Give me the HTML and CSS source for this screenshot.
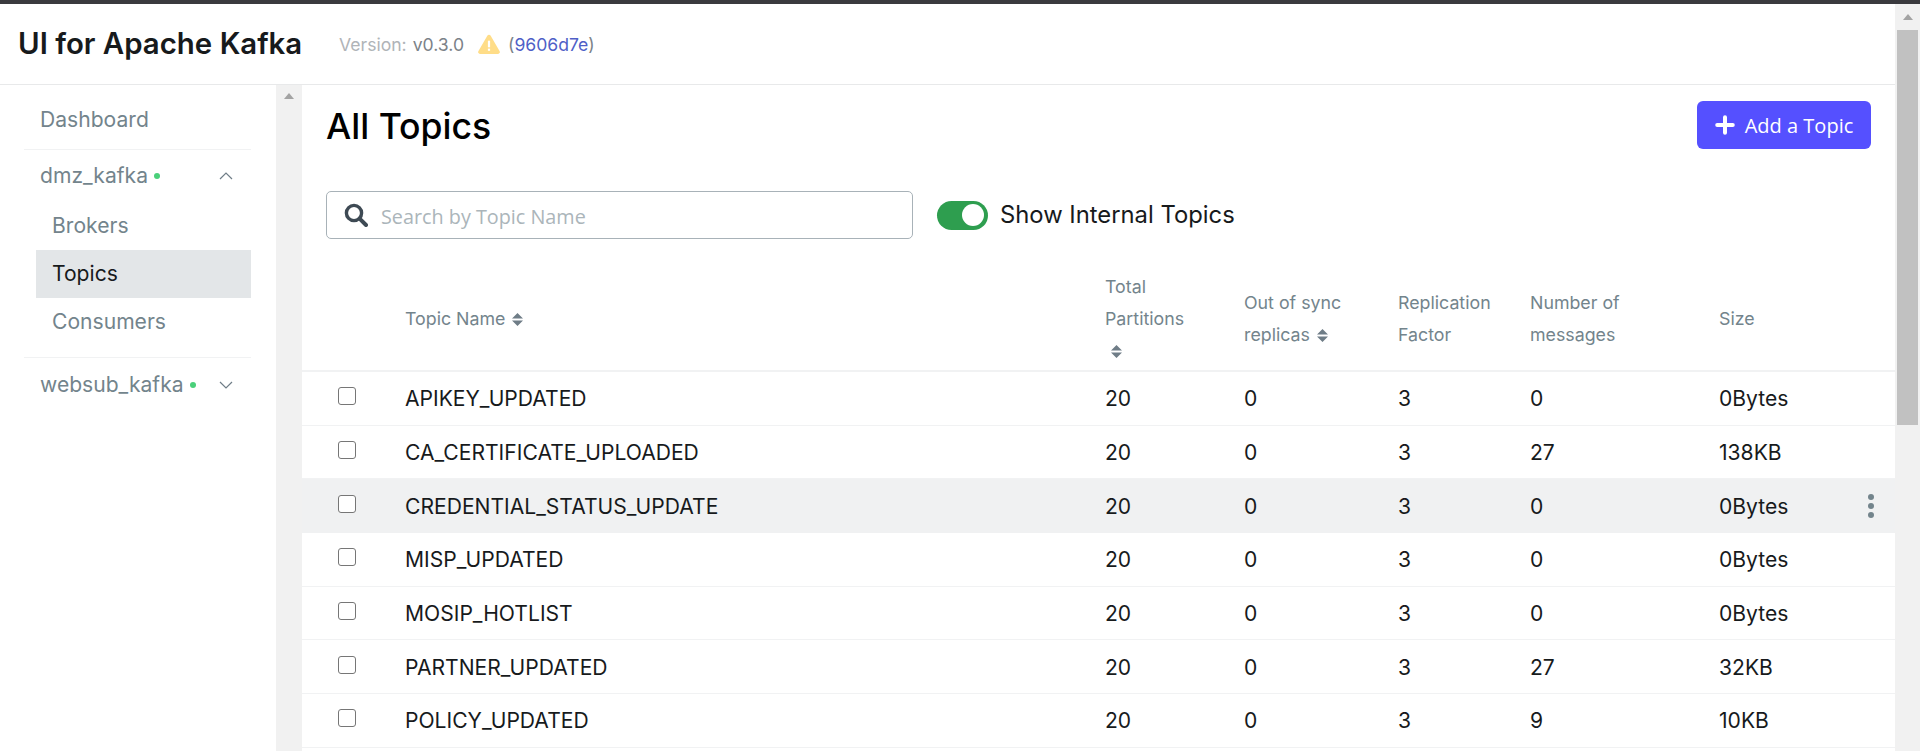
FILE: index.html
```html
<!DOCTYPE html>
<html lang="en">
<head>
<meta charset="utf-8">
<title>UI for Apache Kafka</title>
<link rel="stylesheet" href="styles.css">
</head>
<body>
<div class="window">
  <div class="page">
    <header class="navbar">
      <span class="brand">UI for Apache Kafka</span>
      <span class="version">
        <span class="version-label">Version:</span>
        <span class="version-num">v0.3.0</span>
        <svg class="warn" viewBox="0 0 20 18"><path d="M10 0.5a1.6 1.6 0 0 1 1.4.8l8.3 14.4a1.6 1.6 0 0 1-1.4 2.3H1.7a1.6 1.6 0 0 1-1.4-2.3L8.6 1.3A1.6 1.6 0 0 1 10 .5z" fill="#ffdd88"/><rect x="9" y="6" width="2" height="6" fill="#fff"/><rect x="9" y="13.2" width="2" height="2" fill="#fff"/></svg>
        <span class="paren">(<span class="hash">9606d7e</span>)</span>
      </span>
    </header>
    <div class="body">
      <nav class="sidebar">
        <a class="nav-top">Dashboard</a>
        <hr class="nav-rule">
        <div class="cluster">
          <span class="cluster-name">dmz_kafka</span><i class="dot"></i>
          <svg class="chev" viewBox="0 0 14 8"><path d="M1 7l6-6 6 6" fill="none" stroke="#6f7d87" stroke-width="1.2"/></svg>
        </div>
        <a class="nav-sub">Brokers</a>
        <a class="nav-sub active">Topics</a>
        <a class="nav-sub">Consumers</a>
        <hr class="nav-rule second">
        <div class="cluster">
          <span class="cluster-name">websub_kafka</span><i class="dot"></i>
          <svg class="chev" viewBox="0 0 14 8"><path d="M1 1l6 6 6-6" fill="none" stroke="#6f7d87" stroke-width="1.2"/></svg>
        </div>
      </nav>
      <div class="side-track"><i class="arrow-up"></i></div>
      <main class="main">
        <div class="title-row">
          <h1 class="title">All Topics</h1>
          <button class="add-btn"><svg class="plus" viewBox="0 0 18 18"><path d="M9 2v14M2 9h14" stroke="#fff" stroke-width="3.6" stroke-linecap="round"/></svg>Add a Topic</button>
        </div>
        <div class="filter-row">
          <label class="search">
            <svg class="search-icon" viewBox="0 0 24 24"><circle cx="10" cy="10" r="7.6" fill="none" stroke="#3e4a54" stroke-width="3.4"/><path d="M15.6 15.6l6.4 6.4" stroke="#3e4a54" stroke-width="4" stroke-linecap="round"/></svg>
            <input class="search-input" placeholder="Search by Topic Name">
          </label>
          <span class="toggle"><i class="knob"></i></span>
          <span class="toggle-label">Show Internal Topics</span>
        </div>
        <table class="topics">
          <colgroup>
            <col class="c-check"><col class="c-name"><col class="c-part"><col class="c-sync"><col class="c-repl"><col class="c-msgs"><col class="c-size"><col class="c-act">
          </colgroup>
          <thead>
            <tr>
              <th></th>
              <th>Topic Name <svg class="sort" viewBox="0 0 11 13"><path d="M5.5 0L11 5.5H0zM0 7.5h11L5.5 13z" fill="#6f7d87"/></svg></th>
              <th>Total<br>Partitions<br><svg class="sort wide" viewBox="0 0 11 13"><path d="M5.5 0L11 5.5H0zM0 7.5h11L5.5 13z" fill="#6f7d87"/></svg></th>
              <th>Out of sync<br>replicas <svg class="sort" viewBox="0 0 11 13"><path d="M5.5 0L11 5.5H0zM0 7.5h11L5.5 13z" fill="#6f7d87"/></svg></th>
              <th>Replication<br>Factor</th>
              <th>Number of<br>messages</th>
              <th>Size</th>
              <th></th>
            </tr>
          </thead>
          <tbody>
            <tr><td><i class="check"></i></td><td>APIKEY_UPDATED</td><td>20</td><td>0</td><td>3</td><td>0</td><td>0Bytes</td><td></td></tr>
            <tr><td><i class="check"></i></td><td>CA_CERTIFICATE_UPLOADED</td><td>20</td><td>0</td><td>3</td><td>27</td><td>138KB</td><td></td></tr>
            <tr class="hover"><td><i class="check"></i></td><td>CREDENTIAL_STATUS_UPDATE</td><td>20</td><td>0</td><td>3</td><td>0</td><td>0Bytes</td><td><span class="dots"><i></i><i></i><i></i></span></td></tr>
            <tr><td><i class="check"></i></td><td>MISP_UPDATED</td><td>20</td><td>0</td><td>3</td><td>0</td><td>0Bytes</td><td></td></tr>
            <tr><td><i class="check"></i></td><td>MOSIP_HOTLIST</td><td>20</td><td>0</td><td>3</td><td>0</td><td>0Bytes</td><td></td></tr>
            <tr><td><i class="check"></i></td><td>PARTNER_UPDATED</td><td>20</td><td>0</td><td>3</td><td>27</td><td>32KB</td><td></td></tr>
            <tr><td><i class="check"></i></td><td>POLICY_UPDATED</td><td>20</td><td>0</td><td>3</td><td>9</td><td>10KB</td><td></td></tr>
          </tbody>
        </table>
      </main>
    </div>
  </div>
  <div class="page-scroll"><i class="arrow-up"></i><div class="thumb"></div></div>
</div>
</body>
</html>
```

FILE: styles.css
```css
* { box-sizing: border-box; }
html, body { margin: 0; height: 100%; overflow: hidden; }
body {
  font-family: Inter, "Liberation Sans", sans-serif;
  font-size: 21.1px;
  color: #171a1c;
  background: #fff;
  border-top: 4px solid #3a3a3e;
}
.window { display: flex; height: 747px; overflow: hidden; }
.page { flex: 1; min-width: 0; display: flex; flex-direction: column; }

.navbar {
  height: 81px;
  flex: none;
  display: flex;
  align-items: center;
  padding: 0 0 0 18px;
  border-bottom: 1px solid #e8e9ea;
}
.brand { font-size: 29.4px; font-weight: 600; color: #171a1c; width: 321px; line-height: 1; }
.version { display: flex; align-items: center; font-size: 17.6px; }
.version-label { color: #b0b4b8; margin-right: 6px; }
.version-num { color: #7b8288; }
.warn { width: 22px; height: 20px; margin: 0 8px 0 14px; }
.paren { color: #7b8288; }
.hash { color: #4f5fc7; }

.body { flex: 1; display: flex; min-height: 0; }
.sidebar { width: 276px; flex: none; padding: 11px 25px 0 24px; }
.nav-top {
  display: block;
  height: 48px;
  line-height: 48px;
  padding-left: 16px;
  color: #73848c;
}
.nav-rule { border: 0; height: 1px; margin: 5px 0 0; background: #f1f2f3; }
.nav-rule.second { margin-top: 11px; }
.cluster {
  display: flex;
  align-items: center;
  height: 52px;
  padding-left: 16px;
  color: #73848c;
}
.cluster-name { line-height: 1; }
.nav-rule.second + .cluster { height: 54px; }
.dot { width: 6px; height: 6px; border-radius: 50%; background: #4ad07a; margin-left: 6px; }
.chev { width: 14px; height: 8px; margin-left: auto; margin-right: 18px; }
.nav-sub {
  display: block;
  height: 48px;
  line-height: 48px;
  margin-left: 12px;
  padding-left: 16px;
  color: #73848c;
}
.nav-sub.active { background: #e3e6e8; color: #171a1c; }

.side-track {
  width: 26px;
  flex: none;
  background: #f1f1f1;
  display: flex;
  justify-content: center;
  padding-top: 8px;
}
.arrow-up {
  display: block;
  width: 0;
  height: 0;
  border-left: 5.5px solid transparent;
  border-right: 5.5px solid transparent;
  border-bottom: 6px solid #a3a3a3;
}

.main { flex: 1; min-width: 0; }
.title-row {
  display: flex;
  justify-content: space-between;
  height: 48px;
  margin-top: 16px;
  padding: 0 24px;
}
.title { margin: 2px 0 0; font-size: 35.6px; font-weight: 500; color: #000; line-height: 48px; }
.add-btn {
  width: 174px;
  height: 48px;
  display: flex;
  align-items: center;
  justify-content: center;
  gap: 10px;
  border: 0;
  border-radius: 6px;
  background: #5550ff;
  color: #fff;
  font-family: "Open Sans", sans-serif;
  font-size: 20px;
}
.plus { width: 20px; height: 20px; }
.filter-row {
  display: flex;
  align-items: center;
  margin-top: 42px;
  padding-left: 24px;
}
.search {
  width: 587px;
  height: 48px;
  display: flex;
  align-items: center;
  padding-left: 17px;
  border: 1px solid #a8b2b8;
  border-radius: 5px;
}
.search-icon { width: 24px; height: 24px; flex: none; }
.search-input {
  flex: 1;
  min-width: 0;
  height: 30px;
  margin: 2px 0 0 13px;
  border: 0;
  outline: 0;
  padding: 0;
  background: none;
  font-family: "Open Sans", sans-serif;
  font-size: 19.8px;
}
.search-input::placeholder { color: #abb5ba; opacity: 1; }
.toggle {
  width: 51px;
  height: 29px;
  margin-left: 24px;
  border-radius: 15px;
  background: #2e9e4f;
  display: flex;
  justify-content: flex-end;
  align-items: center;
  padding-right: 4px;
}
.knob { width: 22px; height: 22px; border-radius: 50%; background: #fff; }
.toggle-label {
  margin: -1px 0 0 12px;
  font-size: 23.8px;
  color: #171a1c;
}

.topics {
  width: 1593px;
  margin-top: 27px;
  table-layout: fixed;
  border-collapse: separate;
  border-spacing: 0;
}
.c-check { width: 103px; }
.c-name { width: 700px; }
.c-part { width: 139px; }
.c-sync { width: 154px; }
.c-repl { width: 132px; }
.c-msgs { width: 189px; }
.c-size { width: 127px; }
.c-act { width: 49px; }
th {
  height: 106px;
  padding: 2px 0 0;
  text-align: left;
  font-weight: 400;
  font-size: 17.8px;
  line-height: 32px;
  color: #73848c;
  border-bottom: 2px solid #f1f2f3;
}
.sort { width: 11px; height: 13px; vertical-align: -1px; margin-left: 2px; }
.sort.wide { margin-left: 6px; }
td {
  height: 53.67px;
  padding: 2px 0 0;
  font-size: 21.1px;
  line-height: 32px;
  border-bottom: 1px solid #f1f2f3;
  color: #171a1c;
}
.hover td { background: #f0f1f2; border-bottom-color: #f0f1f2; }
.check {
  display: block;
  width: 18px;
  height: 18px;
  margin: -6px 0 0 36px;
  border: 1.5px solid #767676;
  border-radius: 3px;
  background: #fff;
}
.dots { display: flex; flex-direction: column; align-items: center; gap: 3px; margin: -2px 0 0 10px; width: 30px; }
.dots i { width: 6px; height: 6px; border-radius: 50%; background: #73848c; }

.page-scroll {
  width: 25px;
  flex: none;
  background: #f1f1f1;
  border-left: 2px solid #f1f1f1;
  display: flex;
  flex-direction: column;
  align-items: center;
  padding: 10px 2px 0 0;
}
.thumb { width: 21px; height: 395px; margin-top: 10px; background: #c1c1c1; }
```
